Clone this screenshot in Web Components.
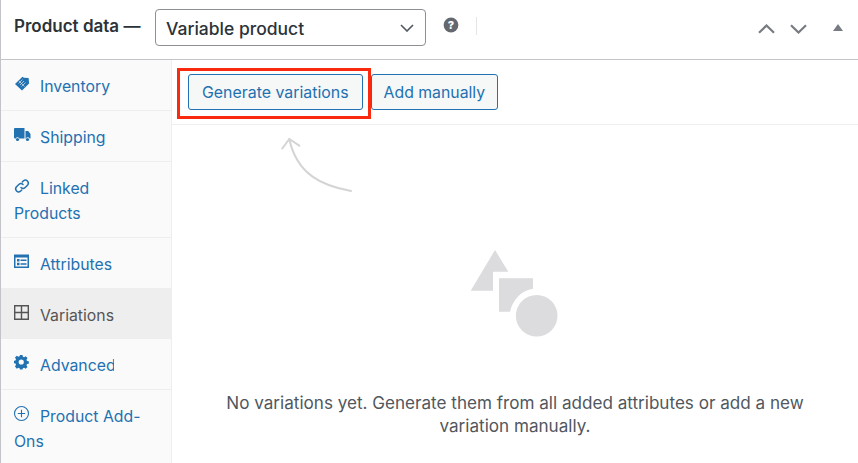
<!DOCTYPE html>
<html>
<head>
<meta charset="utf-8">
<style>
  html, body { margin: 0; padding: 0; background: #fff; }
  body { width: 858px; height: 463px; overflow: hidden; font-family: Inter, "Liberation Sans", sans-serif; }
</style>
</head>
<body>
<product-data>
  <data-header slot="header"></data-header>
  <data-tabs slot="tabs">
    <data-tab icon="tag">Inventory</data-tab>
    <data-tab icon="truck">Shipping</data-tab>
    <data-tab icon="link">Linked Products</data-tab>
    <data-tab icon="card" clip>Attributes</data-tab>
    <data-tab icon="grid" clip active>Variations</data-tab>
    <data-tab icon="gear" clip>Advanced</data-tab>
    <data-tab icon="plus" last>Product Add-Ons</data-tab>
  </data-tabs>
  <variations-panel slot="panel"></variations-panel>
</product-data>

<script>
class ProductData extends HTMLElement {
  constructor() {
    super();
    this.attachShadow({ mode: 'open' });
    this.shadowRoot.innerHTML = `
      <style>
        :host { display: block; height: 463px; border-left: 1px solid #c3c4c7; box-sizing: border-box; overflow: hidden; }
        .body { display: flex; height: 403px; }
      </style>
      <slot name="header"></slot>
      <div class="body">
        <slot name="tabs"></slot>
        <slot name="panel"></slot>
      </div>
    `;
  }
}

class DataHeader extends HTMLElement {
  constructor() {
    super();
    this.attachShadow({ mode: 'open' });
    this.shadowRoot.innerHTML = `
      <style>
        :host { display: flex; align-items: flex-start; height: 59px; border-bottom: 1px solid #c3c4c7; box-sizing: content-box; color: #2c3338; }
        .title { margin: 15px 0 0 13px; font-size: 17px; line-height: 22px; font-weight: 600; white-space: nowrap; width: 141px; }
        .select { margin-top: 9px; width: 271px; height: 37px; box-sizing: border-box; border: 1px solid #8c8f94; border-radius: 4px; display: flex; align-items: center; justify-content: space-between; padding: 1px 11px 0 10px; font-size: 17.5px; font-weight: 500; }
        .help { margin: 17px 0 0 17px; width: 16px; height: 16px; }
        .sep { margin: 17px 0 0 17px; width: 1px; height: 18px; background: #e5e5e5; }
        .sorts { margin: 24px 0 0 auto; display: flex; align-items: flex-start; }
        svg { display: block; }
      </style>
      <div class="title">Product data —</div>
      <div class="select">
        <span>Variable product</span>
        <svg width="14" height="8" viewBox="0 0 14 8"><path d="M1 1l6 6 6-6" fill="none" stroke="#50575e" stroke-width="1.6"/></svg>
      </div>
      <svg class="help" viewBox="0 0 16 16"><circle cx="8" cy="8" r="7.4" fill="#646970"/><text x="8" y="12" text-anchor="middle" font-family="Inter, sans-serif" font-size="11" font-weight="800" fill="#fff">?</text></svg>
      <div class="sep"></div>
      <div class="sorts">
        <svg width="17" height="10" viewBox="0 0 17 10" style="margin-right:15px"><path d="M1 8.800L8.500 1.500 16 8.800" fill="none" stroke="#787c82" stroke-width="2.200"/></svg>
        <svg width="17" height="10" viewBox="0 0 17 10" style="margin-right:26px"><path d="M1 1.200L8.500 8.500 16 1.200" fill="none" stroke="#787c82" stroke-width="2.200"/></svg>
        <svg width="10" height="7" viewBox="0 0 10 7" style="margin-right:15px"><path d="M5 0l5 7H0z" fill="#787c82"/></svg>
      </div>
    `;
  }
}

class DataTabs extends HTMLElement {
  constructor() {
    super();
    this.attachShadow({ mode: 'open' });
    this.shadowRoot.innerHTML = `
      <style>
        :host { display: block; width: 171px; flex: none; box-sizing: border-box; background: #fafafa; border-right: 1px solid #eee; }
      </style>
      <slot></slot>
    `;
  }
}

const TAB_ICONS = {
  tag: '<path d="M8.500 .8l1.300.9 4.800.3.500 5.400L8 14.600 1 8z" fill="currentColor"/><path d="M4.500 7.500l4-4M6 9l4-4M7.500 10.500l4-4M5 5l5.500 5.500" stroke="#fafafa" stroke-width=".6"/>',
  truck: '<path d="M0 2A1 1 0 0 1 1 1h9.500v10.500H5.300a2 2 0 0 0-3.600 0H1a1 1 0 0 1-1-1z" fill="currentColor"/><path d="M11.500 4h2.700l2.300 3v4.500h-.9a2 2 0 0 0-3.600 0h-.5z" fill="currentColor"/><circle cx="3.500" cy="12.500" r="1.600" fill="currentColor"/><circle cx="13.500" cy="12.500" r="1.600" fill="currentColor"/>',
  link: '<g fill="none" stroke="currentColor" stroke-width="1.500" stroke-linecap="round"><path d="M7 9.500a3 3 0 0 0 4.200 0l2.500-2.500a3 3 0 0 0-4.200-4.200L8.300 4"/><path d="M9 6.500a3 3 0 0 0-4.200 0L2.300 9a3 3 0 0 0 4.200 4.200L7.700 12"/></g>',
  card: '<path fill-rule="evenodd" d="M0 .5h15V14H0zM1.500 3.500v9h12v-9z" fill="currentColor"/><path d="M3 5h2.500v2.500H3zM3 8.800h2.500v2.400H3zM6.500 5.500h6V7h-6zM6.500 9.200h6v1.500h-6z" fill="currentColor"/>',
  grid: '<path d="M.7 .7h13.600v13.600H.7zM7.500 .7v13.600M.7 7.500h13.600" fill="none" stroke="currentColor" stroke-width="1.400"/>',
  gear: '<path fill-rule="evenodd" d="M6 1h2.500l.4 1.800 1.200.5 1.600-1 1.800 1.800-1 1.600.5 1.200 1.800.4v2.400l-1.800.4-.5 1.200 1 1.600-1.800 1.800-1.600-1-1.200.5-.4 1.300H6l-.4-1.300-1.200-.5-1.600 1L1 12.400l1-1.600-.5-1.200L0 9.200V6.800l1.500-.4.500-1.200-1-1.600 1.800-1.800 1.600 1 1.200-.5zM7.250 5.400a2.600 2.600 0 1 0 0 5.200 2.600 2.600 0 0 0 0-5.200z" fill="currentColor" transform="translate(0 -1)"/>',
  plus: '<circle cx="7.500" cy="7.500" r="7" fill="none" stroke="currentColor" stroke-width="1.100"/><path d="M7.500 3.800v7.400M3.800 7.500h7.400" stroke="currentColor" stroke-width="1.100"/>'
};

class DataTab extends HTMLElement {
  constructor() {
    super();
    this.attachShadow({ mode: 'open' });
  }

  connectedCallback() {
    const icon = TAB_ICONS[this.getAttribute('icon')] || '';
    this.shadowRoot.innerHTML = `
      <style>
        :host { display: block; box-sizing: border-box; padding: 14px 21px 11px 13px; font-size: 15.8px; line-height: 25px; color: #2271b1; border-bottom: 1px solid #eee; }
        :host([active]) { background: #eee; color: #555; border-bottom: 0; }
        :host([last]) { border-bottom: 0; }
        svg { width: 17px; height: 16px; vertical-align: 0; margin-right: 9px; overflow: visible; }
        .clip { display: inline-block; vertical-align: top; width: 73.500px; overflow: hidden; white-space: nowrap; }
      </style>
      <svg viewBox="0 0 17 16">${icon}</svg>${this.hasAttribute('clip') ? '<span class="clip"><slot></slot></span>' : '<slot></slot>'}
    `;
  }
}

class WpButton extends HTMLElement {
  constructor() {
    super();
    this.attachShadow({ mode: 'open' });
    this.shadowRoot.innerHTML = `
      <style>
        :host { display: inline-flex; align-items: center; height: 36px; box-sizing: border-box; padding: 0 var(--button-pad, 13px); border: 1px solid #2271b1; border-radius: 3px; background: var(--button-bg, #f6f7f7); color: #2271b1; font-size: var(--button-size, 15.9px); white-space: nowrap; }
      </style>
      <slot></slot>
    `;
  }
}

class VariationsPanel extends HTMLElement {
  constructor() {
    super();
    this.attachShadow({ mode: 'open' });
    this.shadowRoot.innerHTML = `
      <style>
        :host { display: flex; flex-direction: column; flex: 1; min-width: 0; color: #50575e; }
        .toolbar { height: 65px; flex: none; box-sizing: border-box; border-bottom: 1px solid #eee; padding: 14px 0 0 16px; display: flex; align-items: flex-start; }
        .marked { position: relative; margin-right: 8px; }
        .marker { position: absolute; left: -11px; top: -6px; width: 194px; height: 51px; box-sizing: border-box; border: 3px solid #fa2a0f; pointer-events: none; }
        .second { --button-pad: 12px; --button-size: 15.8px; }
        .arrow { display: block; margin: 12px 0 0 109px; }
        .shapes { display: block; margin: 56px 0 0 297px; }
        p { margin: 52px auto 0; width: 600px; text-align: center; font-size: 17.1px; line-height: 23px; }
      </style>
      <div class="toolbar">
        <div class="marked">
          <wp-button>Generate variations</wp-button>
          <div class="marker"></div>
        </div>
        <wp-button class="second">Add manually</wp-button>
      </div>
      <svg class="arrow" width="72" height="56" viewBox="0 0 72 56">
        <g fill="none" stroke="#d3d4d6" stroke-width="2" stroke-linecap="round">
          <path d="M70 54C42 49 16 38 8.300 2"/>
          <path d="M1.300 11.500L8.300 2l10 6.700"/>
        </g>
      </svg>
      <svg class="shapes" width="90" height="90" viewBox="469 249 90 90">
        <g fill="#dcdcde">
          <path d="M495 250l13.300 21.700H493v19H470.700z"/>
          <path d="M499 278.300h34v10.400c-11 1.500-20 10-23 23h-11z"/>
          <circle cx="536.700" cy="315.700" r="20.800"/>
        </g>
      </svg>
      <p>No variations yet. Generate them from all added attributes or add a new variation manually.</p>
    `;
  }
}

customElements.define('product-data', ProductData);
customElements.define('data-header', DataHeader);
customElements.define('data-tabs', DataTabs);
customElements.define('data-tab', DataTab);
customElements.define('wp-button', WpButton);
customElements.define('variations-panel', VariationsPanel);
</script>
</body>
</html>
